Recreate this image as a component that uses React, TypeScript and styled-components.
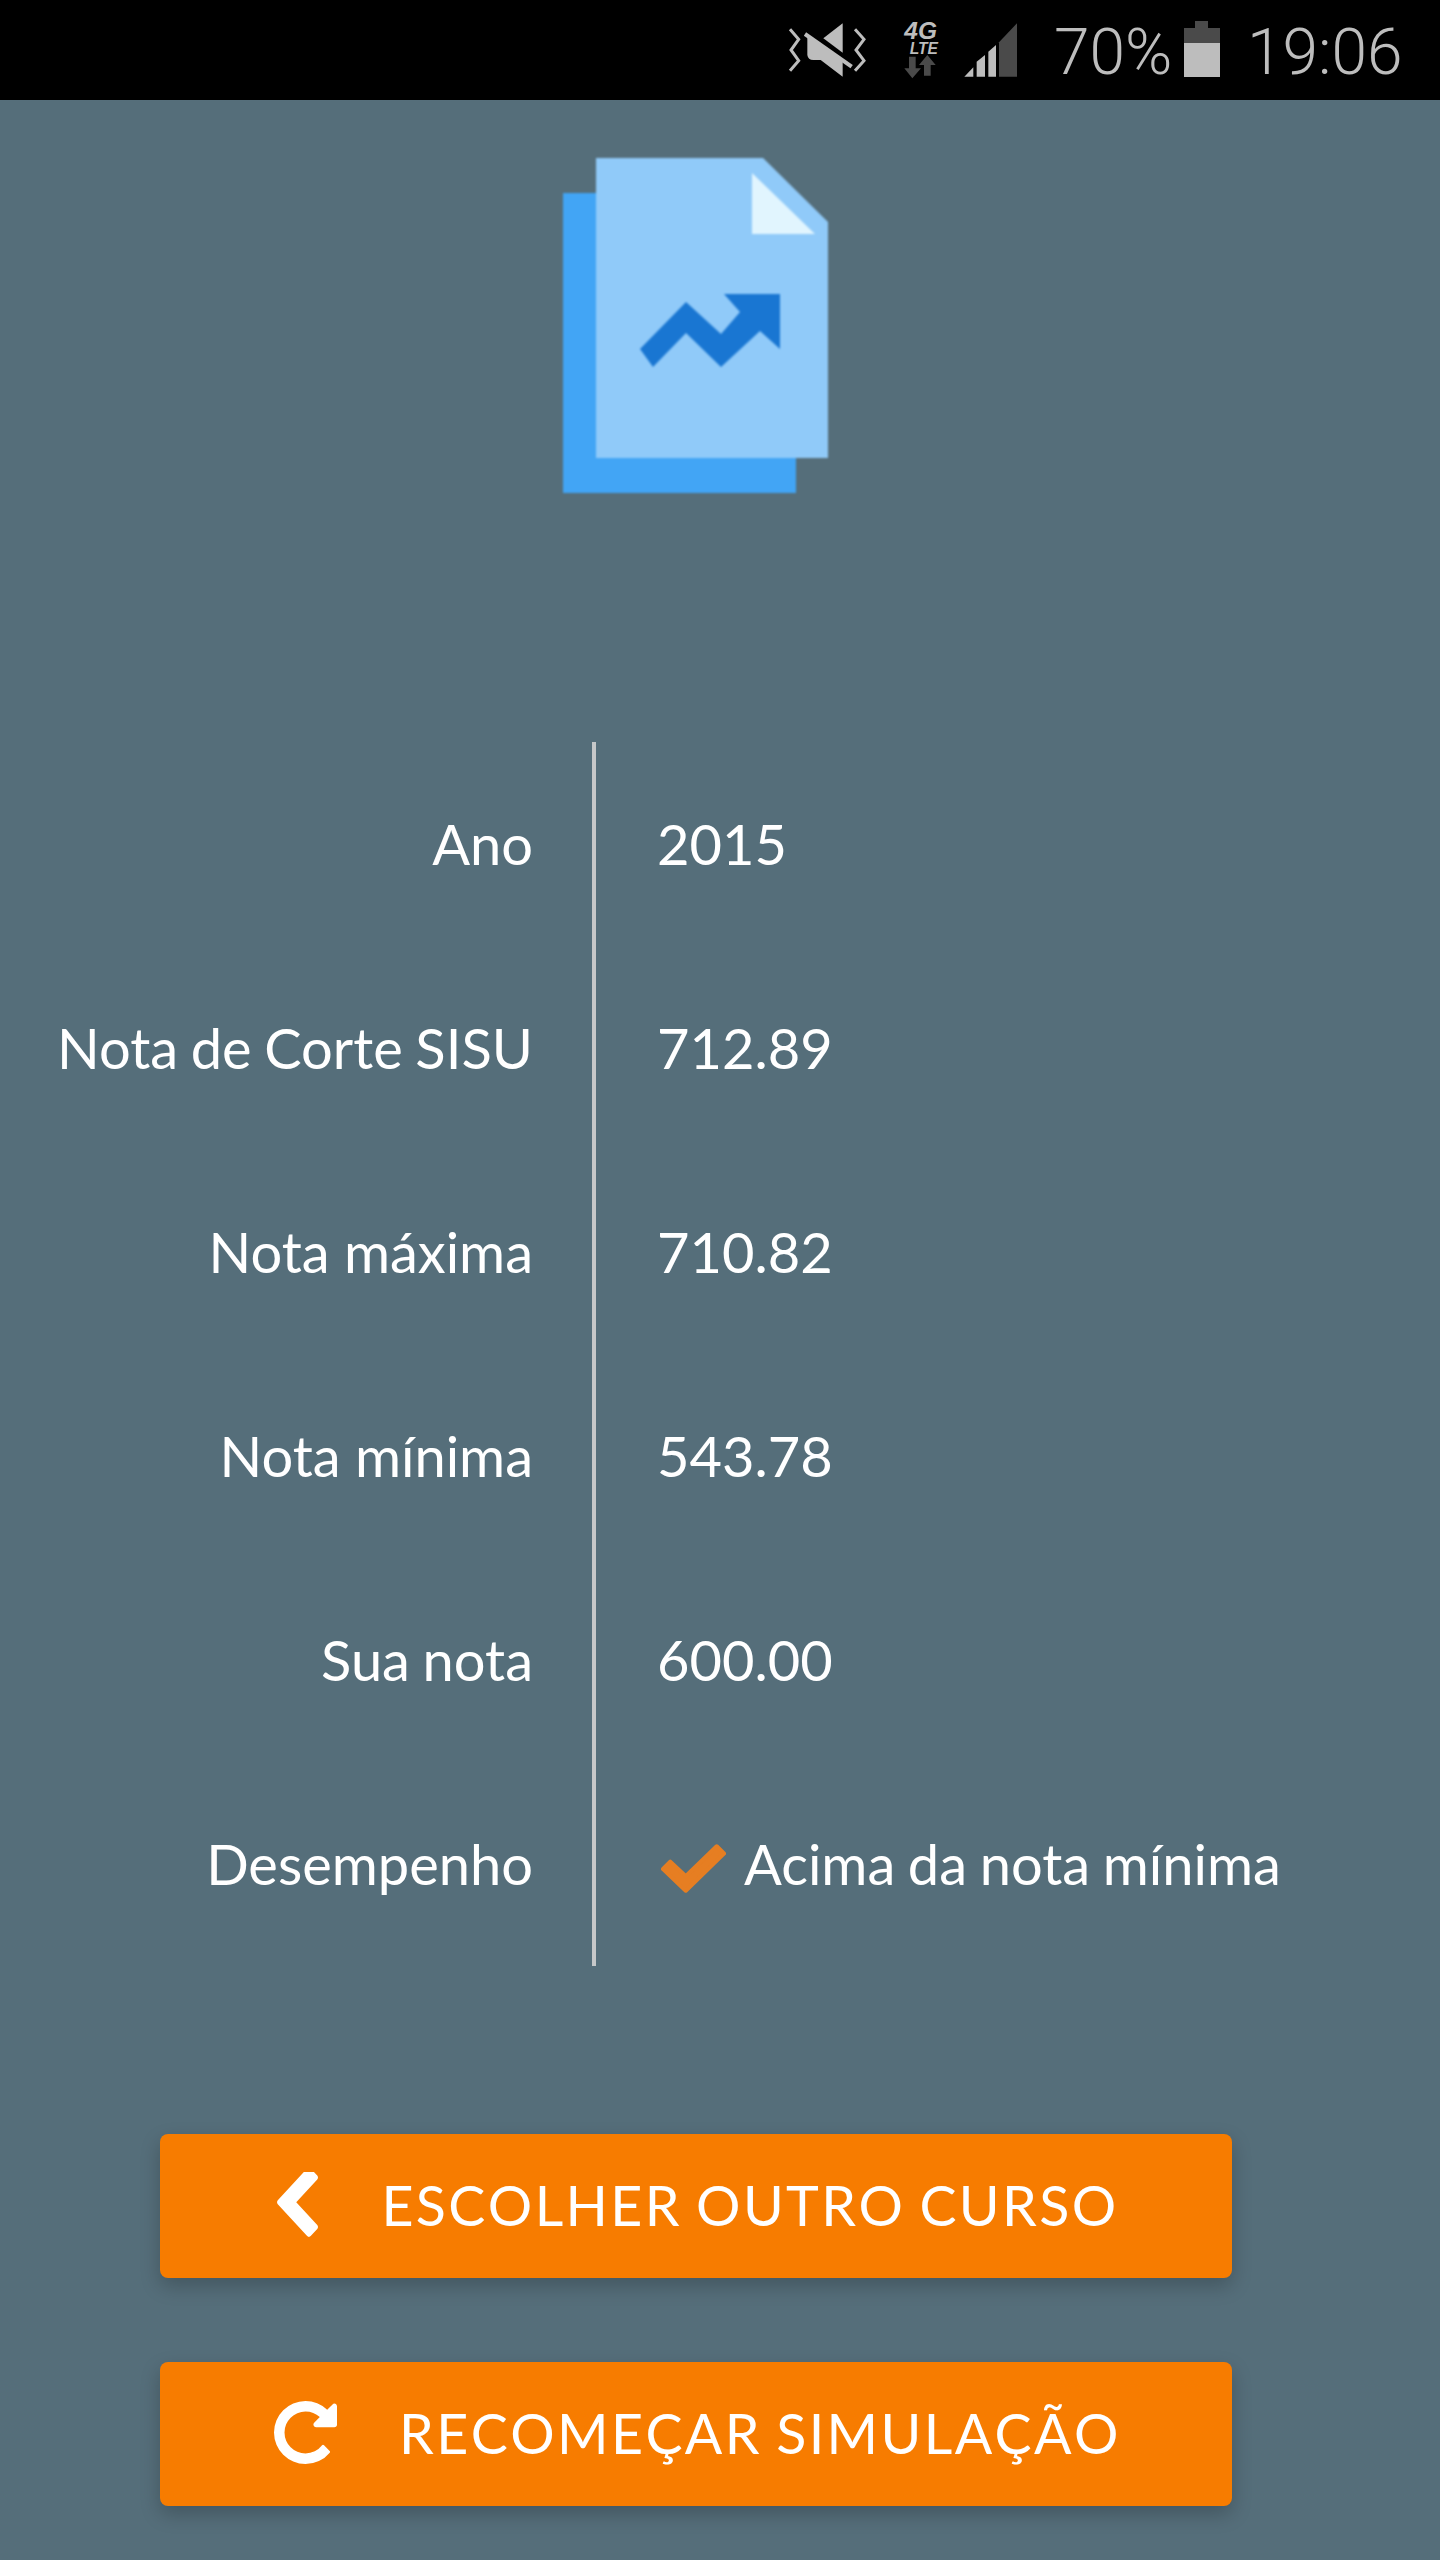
import React from "react";
import styled, { createGlobalStyle } from "styled-components";

const Global = createGlobalStyle`
  html, body { margin: 0; padding: 0; background: #556e7a; }
  * { box-sizing: border-box; }
`;

const Page = styled.div`
  width: 1440px;
  height: 2560px;
  background: #556e7a;
  display: flex;
  flex-direction: column;
  overflow: hidden;
  font-family: Lato, "Liberation Sans", sans-serif;
`;

const StatusBar = styled.div`
  height: 100px;
  background: #000;
  display: flex;
  align-items: center;
  padding-left: 780px;
`;

const StatusIcon = styled.svg<{ $gap: number }>`
  display: block;
  flex: none;
  margin-right: ${(p) => p.$gap}px;
`;

const StatusText = styled.div<{ $width: number }>`
  flex: none;
  width: ${(p) => p.$width}px;
  height: 100px;
  line-height: 105px;
  font-family: Roboto, sans-serif;
  font-weight: 300;
  font-size: 64px;
  color: #bdbdbd;
  white-space: nowrap;
`;

const Hero = styled.div`
  height: 642px;
  padding: 40px 0 0 563px;
`;

const DocIcon = styled.svg`
  display: block;
  filter: blur(1.1px);
`;

const Table = styled.div`
  display: flex;
  flex-direction: column;
`;

const Row = styled.div`
  display: grid;
  grid-template-columns: 592px 1fr;
  height: 204px;
`;

const Label = styled.div<{ $wordSpacing: number }>`
  padding-right: 59px;
  text-align: right;
  font-size: 56px;
  word-spacing: ${(p) => p.$wordSpacing}px;
  line-height: 204px;
  color: #fff;
  white-space: nowrap;
`;

const Value = styled.div`
  border-left: 4px solid #c6c8c9;
  padding-left: 61px;
  font-size: 56px;
  word-spacing: -1.7px;
  line-height: 204px;
  color: #fff;
  display: flex;
  align-items: center;
  white-space: nowrap;
`;

const Check = styled.svg`
  display: block;
  flex: none;
  margin: 8px 18px 0 4px;
`;

const Actions = styled.div`
  margin: 168px 0 0 160px;
  width: 1072px;
  display: flex;
  flex-direction: column;
  gap: 84px;
`;

const ActionButton = styled.button`
  height: 144px;
  width: 100%;
  border: 0;
  padding: 0 0 3px 3px;
  border-radius: 8px;
  background: #f77c00;
  box-shadow: 0 8px 20px rgba(0, 0, 0, 0.22);
  color: #fff;
  font-family: Lato, sans-serif;
  font-size: 55.5px;
  font-kerning: none;
  word-spacing: -2.5px;
  letter-spacing: 2.4px;
  display: flex;
  align-items: center;
  justify-content: center;
  white-space: nowrap;
`;

const ButtonIcon = styled.svg<{ $gap: number }>`
  display: block;
  flex: none;
  margin-right: ${(p) => p.$gap}px;
  fill: #fff;
`;

const rows = [
  { label: "Ano", value: "2015", wordSpacing: 0 },
  { label: "Nota de Corte SISU", value: "712.89", wordSpacing: -1.7 },
  { label: "Nota máxima", value: "710.82", wordSpacing: 0 },
  { label: "Nota mínima", value: "543.78", wordSpacing: 0 },
  { label: "Sua nota", value: "600.00", wordSpacing: -1.7 },
];

export default function App() {
  return (
    <Page>
      <Global />
      <StatusBar>
        <StatusIcon $gap={25} width="90" height="80" viewBox="0 0 270 240">
          <g fill="none" stroke="#bdbdbd" strokeWidth="9">
            <path d="M30 58L56 88 33 120 56 152 30 182" />
            <path d="M225 58L252 88 228 120 252 152 225 182" />
            <path d="M75 72L215 170" strokeWidth="12" />
          </g>
          <path d="M188 40V128L130 85Z" fill="#bdbdbd" />
          <path d="M82 77L188 151V200L122 150H100Q84 150 82 135Z" fill="#bdbdbd" />
        </StatusIcon>
        <StatusIcon $gap={24} width="135" height="80" viewBox="0 0 405 240">
          <text x="28" y="88" fontFamily="Liberation Sans, sans-serif" fontWeight="700" fontStyle="italic" fontSize="72" fill="#bdbdbd" textLength="98" lengthAdjust="spacingAndGlyphs">4G</text>
          <text x="44" y="132" fontFamily="Liberation Sans, sans-serif" fontWeight="700" fontStyle="italic" fontSize="50" fill="#bdbdbd" textLength="85" lengthAdjust="spacingAndGlyphs">LTE</text>
          <path d="M42 140H62V175H78L52 205 28 175H42Z" fill="#4a4a4a" />
          <path d="M87 197V165H72L97 135 122 165H107V197Z" fill="#4a4a4a" />
          <path d="M208 200L235 172V200Z" fill="#bdbdbd" />
          <path d="M245 200V155L270 135V200Z" fill="#bdbdbd" />
          <path d="M280 200V125L303 105V200Z" fill="#bdbdbd" />
          <path d="M312 200V97L366 40V200Z" fill="#4a4a4a" />
        </StatusIcon>
        <StatusText $width={130}>70%</StatusText>
        <StatusIcon $gap={27} width="36" height="80" viewBox="0 0 36 80">
          <path d="M11 11H24V18H36V33H0V18H11Z" fill="#4a4a4a" />
          <rect x="0" y="33" width="36" height="34" fill="#bdbdbd" />
        </StatusIcon>
        <StatusText $width={160}>19:06</StatusText>
      </StatusBar>

      <Hero>
        <DocIcon width="266" height="355" viewBox="563 140 266 355">
          <rect x="563" y="193" width="233" height="300" fill="#42a5f5" />
          <path d="M596 158H763L828 222V458H596Z" fill="#90caf9" />
          <path d="M752 173V234H815Z" fill="#e1f5fe" />
          <path d="M640 349L686 302 721 334 740 312 724 294H780V349L760 331 721 367 686 333 653 367Z" fill="#1976d2" />
        </DocIcon>
      </Hero>

      <Table>
        {rows.map((row) => (
          <Row key={row.label}>
            <Label $wordSpacing={row.wordSpacing}>{row.label}</Label>
            <Value>{row.value}</Value>
          </Row>
        ))}
        <Row>
          <Label $wordSpacing={0}>Desempenho</Label>
          <Value>
            <Check width="65" height="49" viewBox="1 1 63 47">
              <path
                d="M3 25L10 18 25 32 55 3 62 10 25 46Z"
                fill="#e67e22"
                stroke="#e67e22"
                strokeWidth="4"
                strokeLinejoin="round"
              />
            </Check>
            Acima da nota mínima
          </Value>
        </Row>
      </Table>

      <Actions>
        <ActionButton>
          <ButtonIcon $gap={63} width="42" height="66" viewBox="384 128 1062 1536" preserveAspectRatio="none">
            <path d="M1427 301l-531 531 531 531q19 19 19 45t-19 45l-166 166q-19 19-45 19t-45-19l-742-742q-19-19-19-45t19-45l742-742q19-19 45-19t45 19l166 166q19 19 19 45t-19 45z" />
          </ButtonIcon>
          ESCOLHER OUTRO CURSO
        </ActionButton>
        <ActionButton>
          <ButtonIcon $gap={62} width="63" height="63" viewBox="128 128 1536 1536">
            <path d="M1664 256v448q0 26-19 45t-45 19h-448q-42 0-59-40-17-39 14-69l138-138q-148-137-349-137-104 0-198.5 40.5t-163.5 109.5-109.5 163.5-40.5 198.5 40.5 198.5 109.5 163.5 163.5 109.5 198.5 40.5q119 0 225-52t179-147q7-10 23-12 15 0 25 9l137 138q9 8 9.5 20.5t-7.5 22.5q-109 132-264 204.5t-327 72.5q-156 0-298-61t-245-164-164-245-61-298 61-298 164-245 245-164 298-61q147 0 284.5 55.5t244.5 156.5l130-129q29-31 70-14 39 17 39 59z" />
          </ButtonIcon>
          RECOMEÇAR SIMULAÇÃO
        </ActionButton>
      </Actions>
    </Page>
  );
}
